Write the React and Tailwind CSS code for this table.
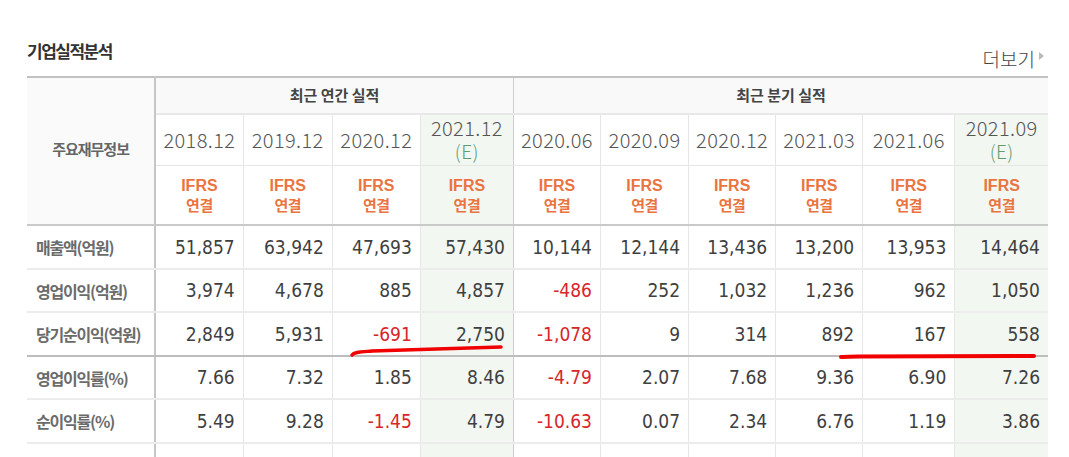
import React from 'react';

const cols = [
  { d: '2018.12', w: 88 },
  { d: '2019.12', w: 89 },
  { d: '2020.12', w: 88 },
  { d: '2021.12', w: 93, e: true, edge: true },
  { d: '2020.06', w: 87 },
  { d: '2020.09', w: 88 },
  { d: '2020.12', w: 87 },
  { d: '2021.03', w: 87 },
  { d: '2021.06', w: 92 },
  { d: '2021.09', w: 93, e: true, last: true },
];

const rows = [
  { label: '매출액(억원)', v: ['51,857', '63,942', '47,693', '57,430', '10,144', '12,144', '13,436', '13,200', '13,953', '14,464'] },
  { label: '영업이익(억원)', v: ['3,974', '4,678', '885', '4,857', '-486', '252', '1,032', '1,236', '962', '1,050'] },
  { label: '당기순이익(억원)', v: ['2,849', '5,931', '-691', '2,750', '-1,078', '9', '314', '892', '167', '558'], strong: true },
  { label: '영업이익률(%)', v: ['7.66', '7.32', '1.85', '8.46', '-4.79', '2.07', '7.68', '9.36', '6.90', '7.26'] },
  { label: '순이익률(%)', v: ['5.49', '9.28', '-1.45', '4.79', '-10.63', '0.07', '2.34', '6.76', '1.19', '3.86'] },
  { label: 'ROE(%)', v: ['', '', '', '', '', '', '', '', '', ''] },
];

// right border of each value column
const sideBorder = (c) =>
  c.last ? 'border-r-0' : c.edge ? 'border-r border-r-[#cfcfcf]' : 'border-r border-r-[#e6e6e6]';

const HeaderCells = () => (
  <>
    <tr className="h-[37px]">
      <td
        rowSpan={3}
        className="bg-[#fafafa] border-r-2 border-r-[#c6c6c6] border-b-2 border-b-[#c9c9c9] text-center align-middle font-['Noto_Sans_CJK_KR',sans-serif] text-[15px] font-bold tracking-[-1px] text-[#666]"
      >
        <span className="relative -top-[2px]">주요재무정보</span>
      </td>
      <td
        colSpan={4}
        className="bg-[#f9f9f9] border-r border-r-[#cfcfcf] border-b-2 border-b-[#e8e8e8] text-center font-['Noto_Sans_CJK_KR',sans-serif] text-[15px] font-bold text-[#444]"
      >
        최근 연간 실적
      </td>
      <td
        colSpan={6}
        className="bg-[#f9f9f9] border-b-2 border-b-[#e8e8e8] text-center font-['Noto_Sans_CJK_KR',sans-serif] text-[15px] font-bold text-[#444]"
      >
        최근 분기 실적
      </td>
    </tr>
    <tr className="h-[51px]">
      {cols.map((c, i) => (
        <td
          key={i}
          className={`${c.e ? 'bg-[#f2f7f2]' : 'bg-white'} ${sideBorder(c)} border-b border-b-[#e6e6e6] text-center font-['Noto_Sans_CJK_KR',sans-serif] font-light text-[20px] tracking-[0.4px] text-[#555] leading-[23px]`}
        >
          {c.e ? (
            <div className="flex flex-col items-center -mt-[2px]">
              <span className="block h-[23px]">{c.d}</span>
              <span className="block h-[23px] text-[#5f9d6e] text-[19px]">(E)</span>
            </div>
          ) : (
            c.d
          )}
        </td>
      ))}
    </tr>
    <tr className="h-[60px]">
      {cols.map((c, i) => (
        <td
          key={i}
          className={`${c.e ? 'bg-[#f2f7f2]' : 'bg-white'} ${sideBorder(c)} border-b-2 border-b-[#c9c9c9] text-center text-[#ea7440]`}
        >
          <div className="flex flex-col items-center">
            <span className="font-['Liberation_Sans',sans-serif] font-bold text-[16px] leading-[19px]">IFRS</span>
            <span className="font-['Noto_Sans_CJK_KR',sans-serif] font-bold text-[15px] tracking-[-0.5px] leading-[19px]">연결</span>
          </div>
        </td>
      ))}
    </tr>
  </>
);

const App = () => {
  return (
    <div className="relative w-[1069px] h-[457px] overflow-hidden bg-white">
      <div className="pl-[27px] pr-[21px]">
        {/* Title + more link */}
        <div className="flex justify-between items-start h-[76px]">
          <h2 className="mt-[41px] font-['Noto_Sans_CJK_KR',sans-serif] text-[17px] font-bold tracking-[-1.5px] text-[#333] leading-[20px]">
            기업실적분석
          </h2>
          <a className="mt-[47px] mr-[4px] flex items-center gap-[4px] font-['Noto_Sans_CJK_KR',sans-serif] font-light text-[19px] leading-[24px] text-[#444]">
            더보기
            <span className="w-0 h-0 border-y-[4px] border-y-transparent border-l-[5px] border-l-[#bbb] mt-[-6px]" />
          </a>
        </div>

        <table className="w-[1021px] table-fixed border-collapse border-t-2 border-t-[#c2c2c2]">
          <colgroup>
            <col style={{ width: 128 }} />
            {cols.map((c, i) => (
              <col key={i} style={{ width: c.w }} />
            ))}
          </colgroup>
          <tbody>
            <HeaderCells />
            {rows.map((r, ri) => (
              <tr key={ri} className={ri % 2 === 0 ? 'h-[44px]' : 'h-[43px]'}>
                <td
                  className={`bg-white border-r-2 border-r-[#c6c6c6] ${r.strong ? 'border-b-2 border-b-[#bdbdbd]' : 'border-b-2 border-b-[#ececec]'} pl-[9px] text-left whitespace-nowrap font-['Noto_Sans_CJK_KR',sans-serif] text-[16px] font-bold tracking-[-1.2px] text-[#6b6b6b] ${ri === 5 ? 'align-bottom' : ''}`}
                >
                  {ri === 5 ? <span className="relative top-[24px]">{r.label}</span> : r.label}
                </td>
                {r.v.map((v, ci) => {
                  const c = cols[ci];
                  return (
                    <td
                      key={ci}
                      className={`${c.e ? 'bg-[#f2f7f2]' : 'bg-white'} ${sideBorder(c)} ${r.strong ? 'border-b-2 border-b-[#bdbdbd]' : 'border-b-2 border-b-[#ececec]'} pr-[8px] text-right font-['DejaVu_Sans_Condensed','Liberation_Sans',sans-serif] text-[19px] ${v.startsWith('-') ? 'text-[#d7262c]' : 'text-[#3f3f3f]'}`}
                    >
                      {v}
                    </td>
                  );
                })}
              </tr>
            ))}
          </tbody>
        </table>
      </div>

      {/* red hand-drawn underlines */}
      <svg className="absolute inset-0 pointer-events-none" width="1069" height="457" viewBox="0 0 1069 457">
        <path
          d="M352 355 C354 352 360 352 372 351 L501 347"
          fill="none"
          stroke="#f00000"
          strokeWidth="3.5"
          strokeLinecap="round"
        />
        <path
          d="M841 357 L858 356.5 L1034 356"
          fill="none"
          stroke="#f00000"
          strokeWidth="4"
          strokeLinecap="round"
        />
      </svg>
    </div>
  );
};

export default App;
